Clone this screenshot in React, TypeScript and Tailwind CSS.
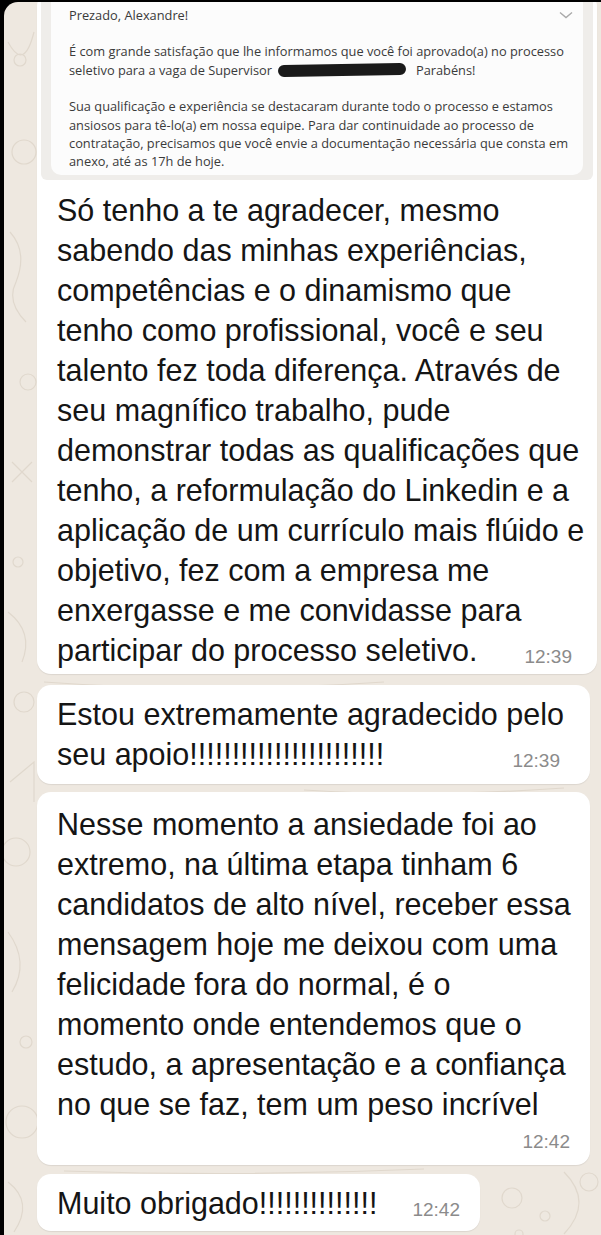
import React from "react";

const main = "font-['Liberation_Sans',_Arial,_sans-serif]";

const first = [
  "Só tenho a te agradecer, mesmo",
  "sabendo das minhas experiências,",
  "competências e o dinamismo que",
  "tenho como profissional, você e seu",
  "talento fez toda diferença. Através de",
  "seu magnífico trabalho, pude",
  "demonstrar todas as qualificações que",
  "tenho, a reformulação do Linkedin e a",
  "aplicação de um currículo mais flúido e",
  "objetivo, fez com a empresa me",
  "enxergasse e me convidasse para",
];

const third = [
  "Nesse momento a ansiedade foi ao",
  "extremo, na última etapa tinham 6",
  "candidatos de alto nível, receber essa",
  "mensagem hoje me deixou com uma",
  "felicidade fora do normal, é o",
  "momento onde entendemos que o",
  "estudo, a apresentação e a confiança",
  "no que se faz, tem um peso incrível",
];

function Time({ t }: { t: string }) {
  return <span className="text-[19px] leading-[24px] text-[#8b8b8b] whitespace-nowrap">{t}</span>;
}

// fundo com rabiscos bem claros, estilo papel de parede do whatsapp
function Doodles() {
  return (
    <svg className="absolute inset-0 pointer-events-none" width="597" height="1233" viewBox="0 0 597 1233">
      <g fill="none" stroke="#e0d8cd" strokeWidth="1.2">
        <circle cx="16" cy="58" r="6" />
        <path d="M4 40 Q20 70 30 30" />
        <circle cx="20" cy="150" r="12" />
        <path d="M6 230 Q24 250 12 280 Q2 300 22 320" />
        <circle cx="24" cy="380" r="8" />
        <path d="M8 460 L28 480 M28 460 L8 480" />
        <circle cx="14" cy="560" r="5" />
        <path d="M4 610 Q30 630 18 660" />
        <circle cx="20" cy="700" r="10" />
        <path d="M6 780 L30 760 L30 800" />
        <circle cx="12" cy="850" r="14" />
        <path d="M4 930 Q26 960 8 990" />
        <circle cx="22" cy="1040" r="6" />
        <circle cx="18" cy="1120" r="16" />
        <path d="M4 1180 Q30 1200 10 1230" />
        <circle cx="508" cy="1196" r="10" />
        <circle cx="541" cy="1214" r="5" />
        <circle cx="585" cy="1180" r="9" />
        <path d="M560 1170 Q590 1200 560 1232" />
        <circle cx="515" cy="1232" r="4" />
        <path d="M40 680 Q200 692 380 680" />
        <path d="M300 788 Q420 796 560 786" />
        <path d="M60 1169 Q240 1175 420 1167" />
      </g>
    </svg>
  );
}

function EmailShot() {
  // print do e-mail recebido
  return (
    <div className="h-[184px] rounded-[6px] bg-[#efedea] px-[10px] pb-[5px] flex">
      <div className="flex-1 rounded-b-[10px] bg-[#fcfcfc] pl-[18px] pr-[9px] pt-[10px] text-[12.8px] leading-[18.4px] text-[#3a3a3a] font-['Open_Sans',_'Noto_Sans',_sans-serif] whitespace-nowrap">
        <div className="flex justify-between items-center">
          <span>Prezado, Alexandre!</span>
          <svg width="16" height="10" viewBox="0 0 16 10">
            <path d="M2 2.5 L8 7.5 L14 2.5" fill="none" stroke="#a9a9a9" strokeWidth="1.4" />
          </svg>
        </div>
        <div className="mt-[18px]">É com grande satisfação que lhe informamos que você foi aprovado(a) no processo</div>
        <div className="flex items-center">
          <span>seletivo para a vaga de Supervisor</span>
          <span className="inline-block ml-[6px] mr-[10px] h-[12px] w-[128px] rounded-full bg-[#1a1a1a] -rotate-1" />
          <span>Parabéns!</span>
        </div>
        <div className="mt-[18px]">Sua qualificação e experiência se destacaram durante todo o processo e estamos</div>
        <div>ansiosos para tê-lo(a) em nossa equipe. Para dar continuidade ao processo de</div>
        <div>contratação, precisamos que você envie a documentação necessária que consta em</div>
        <div>anexo, até as 17h de hoje.</div>
      </div>
    </div>
  );
}

export default function App() {
  return (
    <div className="w-[601px] h-[1235px] bg-black overflow-hidden">
      <div className="relative ml-[4px] mt-[2px] h-[1233px] rounded-tl-[14px] bg-[#eee8e0] overflow-hidden">
        <Doodles />
        <div className={`relative flex flex-col items-start pl-[33px] text-[#151515] ${main}`}>
          {/* bolha com a imagem */}
          <div className="-mt-[10px] w-[560px] rounded-[14px] bg-white p-[4px] pb-[4px] shadow-[0_1px_1px_rgba(0,0,0,0.08)]">
            <EmailShot />
            <div className="px-[16px] pt-[10px] text-[30.5px] leading-[40px] whitespace-nowrap">
              {first.map((l) => (
                <div key={l}>{l}</div>
              ))}
              <div className="flex justify-between items-end">
                <span>participar do processo seletivo.</span>
                <span className="-mb-[2px] mr-[5px]"><Time t="12:39" /></span>
              </div>
            </div>
          </div>

          <div className="mt-[11px] w-[553px] rounded-[14px] bg-white pl-[20px] pr-[30px] pt-[9px] pb-[10px] text-[30.5px] leading-[40px] whitespace-nowrap shadow-[0_1px_1px_rgba(0,0,0,0.08)]">
            <div>Estou extremamente agradecido pelo</div>
            <div className="flex justify-between items-end">
              <span>seu apoio!!!!!!!!!!!!!!!!!!!!!!!</span>
              <span className="-mb-[2px]"><Time t="12:39" /></span>
            </div>
          </div>

          <div className="mt-[8px] w-[553px] rounded-[14px] bg-white pl-[20px] pr-[20px] pt-[12px] pb-[11px] text-[30.5px] leading-[40px] whitespace-nowrap shadow-[0_1px_1px_rgba(0,0,0,0.08)]">
            {third.map((l) => (
              <div key={l}>{l}</div>
            ))}
            <div className="flex justify-end mt-[6px]">
              <Time t="12:42" />
            </div>
          </div>

          <div className="mt-[9px] w-[443px] flex items-end justify-between rounded-[14px] bg-white pl-[20px] pr-[20px] pt-[9px] pb-[8px] text-[30.5px] leading-[40px] whitespace-nowrap shadow-[0_1px_1px_rgba(0,0,0,0.08)]">
            <span>Muito obrigado!!!!!!!!!!!!!!</span>
            <span className="-mb-[2px]"><Time t="12:42" /></span>
          </div>
        </div>
      </div>
    </div>
  );
}
